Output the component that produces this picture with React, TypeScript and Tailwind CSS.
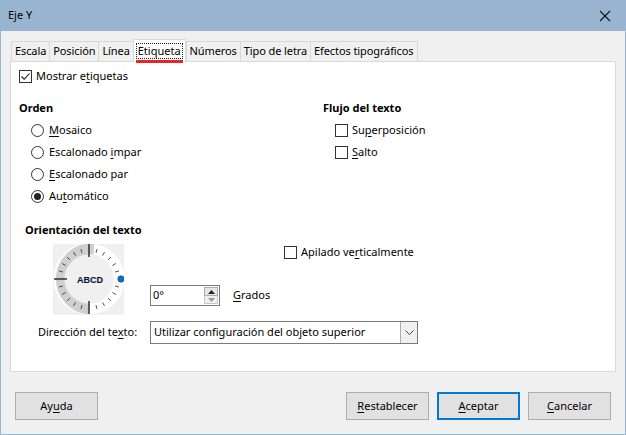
import React from "react";

const font = { fontFamily: '"Noto Sans", "Liberation Sans", sans-serif' };

function U({ children }: { children: React.ReactNode }) {
  return <span className="underline underline-offset-2 decoration-1">{children}</span>;
}

function CheckBox({ checked }: { checked?: boolean }) {
  return (
    <span className="w-[13px] h-[13px] border border-[#333] bg-white flex items-center justify-center shrink-0">
      {checked && (
        <svg width="11" height="11" viewBox="0 0 11 11">
          <path d="M1.5 5.5 L4.2 8.2 L9.5 2.5" fill="none" stroke="#222" strokeWidth="1.1" />
        </svg>
      )}
    </span>
  );
}

function Radio({ checked }: { checked?: boolean }) {
  return (
    <span className="w-[13px] h-[13px] rounded-full border border-[#333] bg-white flex items-center justify-center shrink-0">
      {checked && <span className="w-[7px] h-[7px] rounded-full bg-[#222]" />}
    </span>
  );
}

function Dial() {
  const cx = 36;
  const cy = 35;
  const ticks = [];
  for (let a = 0; a < 360; a += 15) {
    if (a === 0) continue;
    const rad = (a * Math.PI) / 180;
    const major = a % 90 === 0;
    const r1 = major ? 22 : 27;
    const r2 = major ? 35 : 31;
    ticks.push(
      <line
        key={a}
        x1={cx + r1 * Math.cos(rad)}
        y1={cy - r1 * Math.sin(rad)}
        x2={cx + r2 * Math.cos(rad)}
        y2={cy - r2 * Math.sin(rad)}
        stroke="#222"
        strokeWidth={major ? 1.4 : 0.8}
      />
    );
  }
  return (
    <div className="w-[71px] h-[71px] bg-[#f0f0f0]">
      <svg width="71" height="71" viewBox="0 0 71 71">
        <circle cx={cx} cy={cy} r="30" fill="none" stroke="#ffffff" strokeWidth="11" />
        <path
          d={`M ${cx + 5} ${cy - 30} A 30 30 0 0 0 ${cx} ${cy + 30}`}
          fill="none"
          stroke="#cfcfcf"
          strokeWidth="11"
        />
        <circle cx={cx} cy={cy} r="24.5" fill="#f0f0f0" />
        {ticks}
        <text x={cx + 1} y={cy + 3.5} textAnchor="middle" fontSize="9" fontWeight="700" fill="#111" stroke="#1d4ed8" strokeWidth="0.2" style={{ fontFamily: '"Liberation Sans", sans-serif' }}>
          ABCD
        </text>
        <circle cx={cx + 32} cy={cy} r="3.2" fill="#0b6cd1" stroke="#083c78" strokeWidth="0.6" />
      </svg>
    </div>
  );
}

function Button({ children, primary }: { children: React.ReactNode; primary?: boolean }) {
  return (
    <button
      className={
        primary
          ? "w-[83px] h-[28px] bg-[#e1e1e1] border-2 border-[#0078d7] text-[11px] text-black"
          : "w-[83px] h-[28px] bg-[#e1e1e1] border border-[#adadad] text-[11px] text-black"
      }
    >
      {children}
    </button>
  );
}

const tabs = ["Escala", "Posición", "Línea", "Etiqueta", "Números", "Tipo de letra", "Efectos tipográficos"];

export default function App() {
  return (
    <div style={font} className="w-[626px] h-[435px] bg-[#f0f0f0] flex flex-col border-x border-b border-[#99b4d1] text-[11px] text-black overflow-hidden">
      <div className="h-[31px] shrink-0 bg-[#99b4d1] flex items-center justify-between pl-[7px] pr-[14px]">
        <span className="text-[11px]">Eje Y</span>
        <svg width="12" height="12" viewBox="0 0 12 12">
          <path d="M1 1 L11 11 M11 1 L1 11" stroke="#111" strokeWidth="1.1" />
        </svg>
      </div>

      <div className="flex items-end pl-[10px] mt-[8px] h-[22px]">
        {tabs.map((t) =>
          t === "Etiqueta" ? (
            <div key={t} className="relative h-[23px] bg-white border-x border-t border-[#d9d9d9] px-[2px] flex items-center -mb-px z-10">
              <span className="border border-dotted border-[#222] px-[1px] leading-[14px]">{t}</span>
              <span className="absolute left-[2px] right-[2px] bottom-[-1px] h-[3px] bg-[#e8232b]" />
            </div>
          ) : (
            <div key={t} className="h-[20px] bg-[#f0f0f0] border-t border-l last:border-r border-[#d9d9d9] px-[3px] flex items-center tracking-[-0.1px]">
              {t}
            </div>
          )
        )}
      </div>

      <div className="mx-[9px] h-[311px] shrink-0 bg-white border border-[#d9d9d9] flex flex-col pl-[8px]">
        <div className="flex items-center gap-[4px] mt-[6px] h-[16px]">
          <CheckBox checked />
          <span>Mostrar e<U>t</U>iquetas</span>
        </div>

        <div className="flex mt-[16px]">
          <div className="w-[304px] flex flex-col">
            <div className="font-bold h-[16px] leading-[16px]">Orden</div>
            <div className="flex flex-col pl-[12px] mt-[6px] gap-[6px]">
              <div className="flex items-center gap-[5px] h-[16px]">
                <Radio />
                <span><U>M</U>osaico</span>
              </div>
              <div className="flex items-center gap-[5px] h-[16px]">
                <Radio />
                <span>Escalonado <U>i</U>mpar</span>
              </div>
              <div className="flex items-center gap-[5px] h-[16px]">
                <Radio />
                <span><U>E</U>scalonado par</span>
              </div>
              <div className="flex items-center gap-[5px] h-[16px]">
                <Radio checked />
                <span>Au<U>t</U>omático</span>
              </div>
            </div>
          </div>
          <div className="flex flex-col">
            <div className="font-bold h-[16px] leading-[16px]">Flujo del texto</div>
            <div className="flex flex-col pl-[12px] mt-[6px] gap-[6px]">
              <div className="flex items-center gap-[4px] h-[16px]">
                <CheckBox />
                <span>Su<U>p</U>erposición</span>
              </div>
              <div className="flex items-center gap-[4px] h-[16px]">
                <CheckBox />
                <span><U>S</U>alto</span>
              </div>
            </div>
          </div>
        </div>

        <div className="font-bold h-[16px] leading-[16px] mt-[18px] ml-[6px]">Orientación del texto</div>
        <div className="flex mt-[6px] h-[71px]">
          <div className="ml-[34px]">
            <Dial />
          </div>
          <div className="flex flex-col ml-[26px]">
            <div className="flex items-center gap-[4px] h-[16px] ml-[134px]">
              <CheckBox />
              <span>Apilado ve<U>r</U>ticalmente</span>
            </div>
            <div className="flex items-center mt-[25px] h-[21px]">
              <div className="w-[70px] h-[21px] border border-[#7a7a7a] bg-white flex items-center justify-between pl-[2px] pr-[1px]">
                <span>0°</span>
                <div className="flex flex-col w-[14px] h-[17px]">
                  <div className="h-[9px] bg-[#e6e6e6] border border-[#adadad] flex items-center justify-center">
                    <svg width="7" height="4" viewBox="0 0 7 4"><path d="M0 4 L3.5 0 L7 4 Z" fill="#222" /></svg>
                  </div>
                  <div className="h-[8px] bg-[#f0f0f0] border-x border-b border-[#c8c8c8] flex items-center justify-center">
                    <svg width="7" height="4" viewBox="0 0 7 4"><path d="M0 0 L3.5 4 L7 0 Z" fill="#9a9a9a" /></svg>
                  </div>
                </div>
              </div>
              <span className="ml-[13px]"><U>G</U>rados</span>
            </div>
          </div>
        </div>

        <div className="flex items-center mt-[6px] h-[23px]">
          <span className="ml-[19px] w-[112px]">Dirección del te<U>x</U>to:</span>
          <div className="w-[268px] h-[23px] border border-[#7a7a7a] bg-white flex items-center justify-between pl-[3px]">
            <span>Utilizar configuración del objeto superior</span>
            <div className="w-[17px] h-full border-l border-[#adadad] bg-[#f0f0f0] flex items-center justify-center">
              <svg width="9" height="5" viewBox="0 0 9 5"><path d="M0.5 0.5 L4.5 4.5 L8.5 0.5" fill="none" stroke="#444" strokeWidth="1" /></svg>
            </div>
          </div>
        </div>
      </div>

      <div className="flex items-center mt-[20px] px-[14px]">
        <Button>Ay<U>u</U>da</Button>
        <div className="flex-1" />
        <div className="flex gap-[8px]">
          <Button><U>R</U>establecer</Button>
          <Button primary><U>A</U>ceptar</Button>
          <Button><U>C</U>ancelar</Button>
        </div>
      </div>
    </div>
  );
}
